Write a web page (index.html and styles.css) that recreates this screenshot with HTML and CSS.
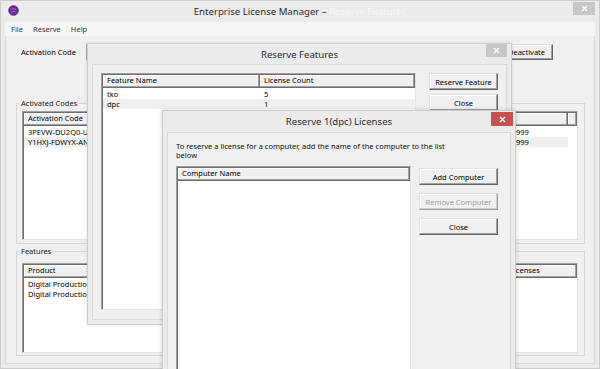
FILE: index.html
```html
<!DOCTYPE html>
<html lang="en">
<head>
    <meta charset="UTF-8">
    <meta name="viewport" content="width=device-width, initial-scale=1.0">
    <link rel="stylesheet" href="styles.css">
</head>
<body>
<div class="desk">

    <!-- main application window -->
    <div class="win main">
        <div class="titlebar">
            <svg class="app-icon" width="11" height="11" viewBox="0 0 11 11">
                <circle cx="5.5" cy="5.5" r="4.8" fill="#6c2a9e" stroke="#4a1a70" stroke-width="0.8"/>
                <path d="M2.5 4.5 Q5.5 2.5 8.5 4.5 M3 7 Q5.5 5.5 8 7" stroke="#a472cc" stroke-width="0.8" fill="none"/>
            </svg>
            <span class="title">Enterprise License Manager – <span class="ghost">Reserve Features</span></span>
            <span class="close close-main">
                <svg width="7" height="7" viewBox="0 0 7 7"><path d="M1 1 L6 6 M6 1 L1 6" stroke="#fff" stroke-width="1.3"/></svg>
            </span>
        </div>
        <div class="menubar">
            <span>File</span>
            <span>Reserve</span>
            <span>Help</span>
        </div>
        <div class="client">
            <div class="code-row">
                <span class="label">Activation Code</span>
                <span class="textbox"></span>
                <button class="btn btn-deactivate">Deactivate</button>
            </div>

            <fieldset class="group group-codes">
                <legend>Activated Codes</legend>
                <div class="list list-codes">
                    <div class="row head">
                        <span class="col" style="width:457px">Activation Code</span>
                        <span class="col" style="width:87px">Expires</span>
                        <span class="col filler"></span>
                    </div>
                    <div class="row">
                        <span class="cell" style="width:457px">3PEVW-DU2Q0-UC7KM</span>
                        <span class="cell" style="width:87px">31-Dec-9999</span>
                    </div>
                    <div class="row sel">
                        <span class="cell" style="width:457px">Y1HXJ-FDWYX-AN3PL</span>
                        <span class="cell" style="width:87px">31-Dec-9999</span>
                    </div>
                </div>
            </fieldset>

            <fieldset class="group group-features">
                <legend>Features</legend>
                <div class="list list-features">
                    <div class="row head">
                        <span class="col" style="width:482px">Product</span>
                        <span class="col grow">Licenses</span>
                    </div>
                    <div class="row">
                        <span class="cell" style="width:482px">Digital Production Center</span>
                        <span class="cell"></span>
                    </div>
                    <div class="row">
                        <span class="cell" style="width:482px">Digital Production Center</span>
                        <span class="cell"></span>
                    </div>
                </div>
            </fieldset>
        </div>
    </div>

    <!-- Reserve Features dialog -->
    <div class="win dlg dlg-features">
        <div class="titlebar">
            <span></span>
            <span class="title">Reserve Features</span>
            <span class="close close-features">
                <svg width="7" height="7" viewBox="0 0 7 7"><path d="M1 1 L6 6 M6 1 L1 6" stroke="#fff" stroke-width="1.3"/></svg>
            </span>
        </div>
        <div class="pane pane-features">
            <div class="list list-reserve">
                <div class="row head">
                    <span class="col" style="width:157px">Feature Name</span>
                    <span class="col grow">License Count</span>
                </div>
                <div class="row">
                    <span class="cell" style="width:157px">tko</span>
                    <span class="cell" style="width:156px">5</span>
                </div>
                <div class="row sel">
                    <span class="cell" style="width:157px">dpc</span>
                    <span class="cell" style="width:156px">1</span>
                </div>
            </div>
            <div class="buttons buttons-features">
                <button class="btn">Reserve Feature</button>
                <button class="btn">Close</button>
            </div>
        </div>
    </div>

    <!-- Reserve licenses dialog (active) -->
    <div class="win dlg dlg-licenses">
        <div class="titlebar">
            <span></span>
            <span class="title">Reserve 1(dpc) Licenses</span>
            <span class="close close-red">
                <svg width="7" height="7" viewBox="0 0 7 7"><path d="M1 1 L6 6 M6 1 L1 6" stroke="#fff" stroke-width="1.3"/></svg>
            </span>
        </div>
        <div class="pane pane-licenses">
            <p class="hint">To reserve a license for a computer, add the name of the computer to the list<br>below</p>
            <div class="pane-row">
                <div class="list list-computers">
                    <div class="row head">
                        <span class="col grow">Computer Name</span>
                    </div>
                </div>
                <div class="buttons buttons-licenses">
                    <button class="btn">Add Computer</button>
                    <button class="btn" disabled>Remove Computer</button>
                    <button class="btn">Close</button>
                </div>
            </div>
        </div>
    </div>

</div>
</body>
</html>
```

FILE: styles.css
```css
body {
    margin: 0;
    font-family: "Noto Sans", "Open Sans", sans-serif;
    font-size: 7.5px;
    color: #000;
}

.desk {
    position: relative;
    width: 600px;
    height: 369px;
    overflow: hidden;
    background: #ebebeb;
}

/* windows */
.win {
    position: absolute;
    box-sizing: border-box;
    display: flex;
    flex-direction: column;
    background: #ebebeb;
    border: 1px solid #cdcdcd;
}

.main {
    left: 0;
    top: 0;
    width: 600px;
    height: 369px;
}

.dlg-features {
    left: 87px;
    top: 43px;
    width: 425px;
    height: 282px;
    box-shadow: 0 0 3px rgba(0, 0, 0, 0.12);
}

.dlg-licenses {
    left: 162px;
    top: 110px;
    width: 354px;
    height: 280px;
    box-shadow: 0 0 4px rgba(0, 0, 0, 0.18);
}

.titlebar {
    display: grid;
    grid-template-columns: 1fr auto 1fr;
    align-items: center;
    flex: none;
}

.main .titlebar { height: 21px; }
.dlg-features .titlebar { height: 20px; }
.dlg-licenses .titlebar { height: 21px; }

.title {
    font-size: 9.6px;
    color: #2b2b2b;
    white-space: nowrap;
}

.ghost {
    color: #f7f7f7;
}

.app-icon {
    margin-left: 7px;
    margin-top: -3px;
}

.close {
    justify-self: end;
    align-self: start;
    display: flex;
    align-items: center;
    justify-content: center;
    background: #c7c7c7;
}

.close-main {
    width: 22px;
    height: 13px;
    margin: 1px 4px 0 0;
}

.close-features {
    width: 21px;
    height: 13px;
    margin: 0 4px 0 0;
}

.close-red {
    width: 22px;
    height: 14px;
    margin: 1px 2px 0 0;
    background: #c75050;
}

/* main window */
.menubar {
    display: flex;
    gap: 10px;
    height: 14px;
    align-items: center;
    margin: 0 4px;
    padding-left: 6px;
    background: #f6f6f7;
    color: #3a3a3a;
    flex: none;
}

.client {
    flex: 1;
    display: flex;
    flex-direction: column;
    margin: 0 4px 4px;
    padding: 8px 9px 0 10px;
    background: #f0f0f0;
    border: 1px solid #dcdcdc;
    border-top: none;
}

.code-row {
    display: flex;
    align-items: center;
    height: 16px;
    padding: 0 32px 0 5px;
    gap: 10px;
}

.textbox {
    flex: 1;
    height: 14px;
    background: #fff;
    border: 1px solid #abadb3;
}

.btn-deactivate {
    width: 53px;
    height: 16px;
}

.group {
    margin: 0;
    border: 1px solid #d5d5d5;
    min-width: 0;
}

.group legend {
    margin-left: -3px;
    padding: 0 2px;
    line-height: 10px;
    color: #1a1a1a;
}

.group-codes {
    margin-top: 38px;
    padding: 3px 6px 3px 5px;
}

.group-features {
    margin-top: 2px;
    padding: 7px 6px 2px 5px;
}

.list-codes { height: 129px; }
.list-features { height: 90px; }

/* list views */
.list {
    box-sizing: border-box;
    background: #fff;
    border: 1px solid;
    border-color: #a0a0a0 #e3e3e3 #e3e3e3 #a0a0a0;
    box-shadow: inset 1px 1px 0 #6d6d6d;
    padding: 1px 0 0 1px;
    overflow: hidden;
}

.row {
    display: flex;
    width: max-content;
    line-height: 10px;
    white-space: nowrap;
}

.row.head {
    width: auto;
    margin-bottom: 1px;
}

.col {
    box-sizing: border-box;
    height: 13px;
    line-height: 11px;
    padding-left: 4px;
    background: #f0f0f0;
    border-right: 1px solid #6d6d6d;
    border-bottom: 1px solid #6d6d6d;
    box-shadow: inset -1px -1px 0 #a0a0a0, inset 1px 1px 0 #fff;
    overflow: hidden;
}

.col.grow, .col.filler {
    flex: 1;
}

.cell {
    box-sizing: border-box;
    padding-left: 4px;
    overflow: hidden;
}

.row.sel {
    background: #f0f0f0;
}

/* buttons */
.btn {
    box-sizing: border-box;
    font: inherit;
    color: #000;
    padding: 0;
    background: #f0f0f0;
    border: 1px solid;
    border-color: #e3e3e3 #646464 #646464 #e3e3e3;
    box-shadow: inset -1px -1px 0 #a0a0a0, inset 1px 1px 0 #fff;
}

.btn:disabled {
    color: #a0a0a0;
    border-color: #e3e3e3 #a0a0a0 #a0a0a0 #e3e3e3;
    box-shadow: inset -1px -1px 0 #d0d0d0, inset 1px 1px 0 #fff;
}

.buttons {
    display: flex;
    flex-direction: column;
}

/* dialog panes */
.pane {
    flex: 1;
    margin: 0 4px 4px;
    background: #f0f0f0;
    border: 1px solid #dadada;
}

.pane-features {
    display: flex;
    padding: 8px 0 0 8px;
}

.list-reserve {
    width: 315px;
    height: 237px;
}

.buttons-features {
    margin-left: 13px;
    gap: 4px;
}

.buttons-features .btn {
    width: 69px;
    height: 17px;
}

.pane-licenses {
    padding: 9px 0 0 8px;
}

.hint {
    margin: 0;
    line-height: 9px;
    color: #111;
}

.pane-row {
    display: flex;
    margin-top: 6px;
}

.list-computers {
    width: 235px;
    height: 220px;
}

.buttons-licenses {
    margin: 2px 0 0 8px;
    gap: 8px;
}

.buttons-licenses .btn {
    width: 79px;
    height: 17px;
}
```
